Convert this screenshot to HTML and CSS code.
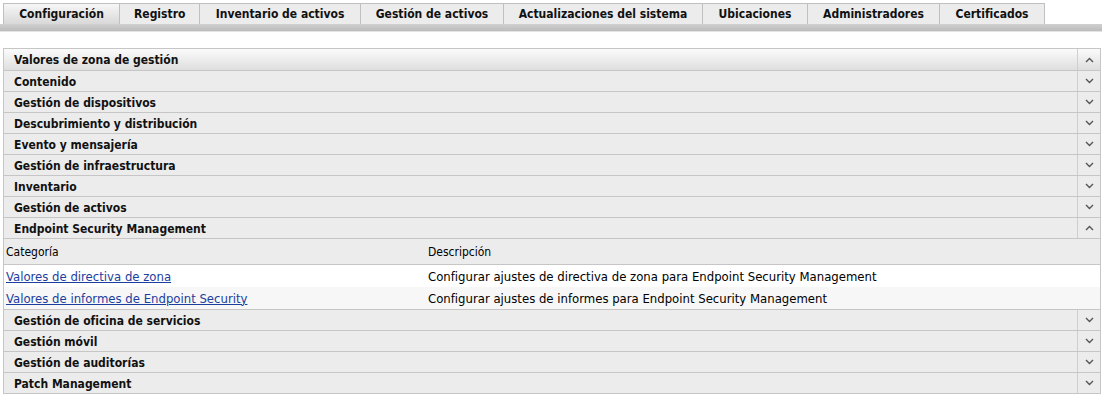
FILE: index.html
```html
<!DOCTYPE html>
<html lang="es">
<head>
    <meta charset="UTF-8">
    <title>Configuración</title>
    <link rel="stylesheet" href="styles.css">
</head>
<body>
    <nav class="tabs">
        <div class="tab active">Configuración</div>
        <div class="tab">Registro</div>
        <div class="tab">Inventario de activos</div>
        <div class="tab">Gestión de activos</div>
        <div class="tab">Actualizaciones del sistema</div>
        <div class="tab">Ubicaciones</div>
        <div class="tab">Administradores</div>
        <div class="tab">Certificados</div>
    </nav>
    <div class="tab-bar"></div>

    <section class="panel">
        <div class="group first open"><span class="title">Valores de zona de gestión</span><span class="toggle up"></span></div>
        <div class="group"><span class="title">Contenido</span><span class="toggle"></span></div>
        <div class="group"><span class="title">Gestión de dispositivos</span><span class="toggle"></span></div>
        <div class="group"><span class="title">Descubrimiento y distribución</span><span class="toggle"></span></div>
        <div class="group"><span class="title">Evento y mensajería</span><span class="toggle"></span></div>
        <div class="group"><span class="title">Gestión de infraestructura</span><span class="toggle"></span></div>
        <div class="group"><span class="title">Inventario</span><span class="toggle"></span></div>
        <div class="group"><span class="title">Gestión de activos</span><span class="toggle"></span></div>
        <div class="group"><span class="title">Endpoint Security Management</span><span class="toggle up"></span></div>
        <table class="items">
            <thead>
                <tr><th class="col-cat">Categoría</th><th>Descripción</th></tr>
            </thead>
            <tbody>
                <tr><td><a href="#">Valores de directiva de zona</a></td><td>Configurar ajustes de directiva de zona para Endpoint Security Management</td></tr>
                <tr class="alt"><td><a href="#">Valores de informes de Endpoint Security</a></td><td>Configurar ajustes de informes para Endpoint Security Management</td></tr>
            </tbody>
        </table>
        <div class="group"><span class="title">Gestión de oficina de servicios</span><span class="toggle"></span></div>
        <div class="group"><span class="title">Gestión móvil</span><span class="toggle"></span></div>
        <div class="group"><span class="title">Gestión de auditorías</span><span class="toggle"></span></div>
        <div class="group"><span class="title">Patch Management</span><span class="toggle"></span></div>
    </section>
</body>
</html>
```

FILE: styles.css
```css
body {
    font-family: "DejaVu Sans Condensed", "DejaVu Sans", sans-serif;
    font-size: 12px;
    color: #000;
    background: #fff;
    margin: 0;
    padding: 3px 0 0 3px;
}
.tabs {
    display: flex;
    height: 21px;
}
.tab {
    background: #ececec;
    border: 1px solid #c0c0c0;
    border-left: none;
    border-bottom: none;
    font-weight: bold;
    font-size: 12px;
    line-height: 20px;
    text-align: center;
    box-sizing: border-box;
    padding: 0 14px;
    color: #111;
}
.tab:nth-child(1) { width: 117px; border-left: 1px solid #c0c0c0; }
.tab:nth-child(2) { width: 80px; }
.tab:nth-child(3) { width: 161px; }
.tab:nth-child(4) { width: 143px; }
.tab:nth-child(5) { width: 199px; }
.tab:nth-child(6) { width: 105px; }
.tab:nth-child(7) { width: 132px; }
.tab:nth-child(8) { width: 105px; }
.tab.active {
    background: linear-gradient(#f6f6f6, #d8d8d8);
}
.tab-bar {
    height: 7px;
    margin-left: -3px;
    background: linear-gradient(#d0d0d0, #bcbcbc);
    border-bottom: 1px solid #e4e4e4;
}
.panel {
    margin-top: 16px;
    width: 1098px;
    border: 1px solid #c6c6c6;
    border-top: none;
    box-sizing: border-box;
}
.group {
    display: flex;
    height: 21px;
    background: #ececec;
    border-top: 1px solid #c6c6c6;
    box-sizing: border-box;
    font-weight: bold;
    color: #111;
}
.group.first {
    height: 22px;
    background: linear-gradient(#fbfbfb, #dedede);
}
.group .title {
    flex: 1;
    padding: 1px 0 0 10px;
    line-height: 20px;
}
.group .toggle {
    width: 22px;
    border-left: 1px solid #cfcfcf;
    background: url("data:image/svg+xml;utf8,<svg xmlns='http://www.w3.org/2000/svg' width='9' height='6'><path d='M1 1L4.5 4.5L8 1' fill='none' stroke='%23555' stroke-width='1.4'/></svg>") center no-repeat;
}
.group .toggle.up {
    background-image: url("data:image/svg+xml;utf8,<svg xmlns='http://www.w3.org/2000/svg' width='9' height='6'><path d='M1 5L4.5 1.5L8 5' fill='none' stroke='%23555' stroke-width='1.4'/></svg>");
}
.items {
    width: 100%;
    border-collapse: collapse;
    border-top: 1px solid #c6c6c6;
    font-size: 13px;
}
.items th {
    text-align: left;
    font-weight: normal;
    font-size: 12px;
    background: #ececec;
    height: 25px;
    padding: 0 0 0 2px;
    border-bottom: 1px solid #c6c6c6;
}
.items th.col-cat { width: 420px; }
.items td {
    height: 22px;
    padding: 0 0 0 2px;
    background: #fff;
}
.items tr.alt td {
    background: #f7f7f7;
}
.items a {
    color: #1b3ea0;
}
```
